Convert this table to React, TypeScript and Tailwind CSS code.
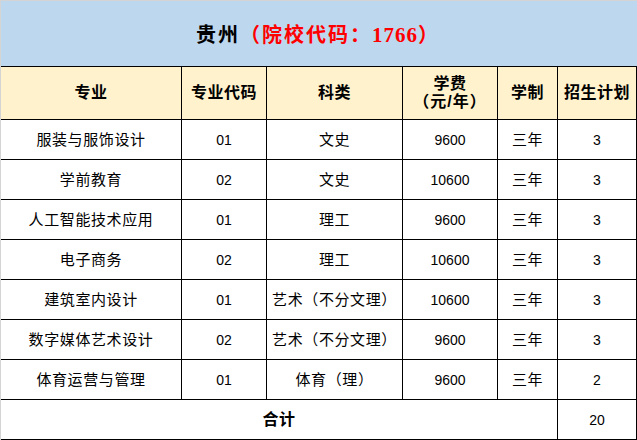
import React from "react";

const rows = [
  ["服装与服饰设计", "01", "文史", "9600", "三年", "3"],
  ["学前教育", "02", "文史", "10600", "三年", "3"],
  ["人工智能技术应用", "01", "理工", "9600", "三年", "3"],
  ["电子商务", "02", "理工", "10600", "三年", "3"],
  ["建筑室内设计", "01", "艺术（不分文理）", "10600", "三年", "3"],
  ["数字媒体艺术设计", "02", "艺术（不分文理）", "9600", "三年", "3"],
  ["体育运营与管理", "01", "体育（理）", "9600", "三年", "2"],
];

const cjk = { fontFamily: '"Liberation Sans", "Noto Sans CJK SC", sans-serif' };

export default function App() {
  return (
    <div className="w-[637px] h-[440px] bg-white overflow-hidden border-l border-[#d4d4d4]" style={cjk}>
      <div className="h-[67px] bg-[#bdd7ee] border-t border-[#d4d4d4] border-b border-b-black flex items-center justify-center pt-[3px] pr-[2px] text-[20px] font-bold leading-none">
        <span className="text-black tracking-[2px]">贵州</span>
        <span className="text-[#ff0000] tracking-[2px]">
          （院校代码：<span style={{ fontFamily: '"Liberation Serif", serif' }} className="tracking-[1px] text-[21px]">1766</span>）
        </span>
      </div>
      <div className="grid grid-cols-[181px_85px_136px_95px_60px_78px] border-r border-black w-[636px]">
        {["专业", "专业代码", "科类", null, "学制", "招生计划"].map((h, i) => (
          <div
            key={i}
            className={`h-[53px] bg-[#fff2cc] border-b border-black flex flex-col items-center justify-center text-[16px] font-bold text-black tracking-[0.5px] leading-[18px] ${i < 5 ? "border-r" : ""}`}
          >
            {h === null ? (
              <>
                <span>学费</span>
                <span className="tracking-[1px]">（元/年）</span>
              </>
            ) : (
              h
            )}
          </div>
        ))}
        {rows.map((r, ri) =>
          r.map((c, ci) => (
            <div
              key={`${ri}-${ci}`}
              className={`h-[40px] pt-[1px] border-b border-black flex items-center justify-center text-black ${ci < 5 ? "border-r" : ""} ${/^\d+$/.test(c) ? "text-[14px]" : "text-[15px] tracking-[0.6px]"}`}
            >
              {c}
            </div>
          ))
        )}
        <div className="col-span-5 h-[40px] pt-[1px] border-r border-b border-black flex items-center justify-center text-[16px] font-bold text-black tracking-[0.5px]">
          合计
        </div>
        <div className="h-[40px] pt-[1px] border-b border-black flex items-center justify-center text-[14px] text-black">
          20
        </div>
      </div>
    </div>
  );
}
